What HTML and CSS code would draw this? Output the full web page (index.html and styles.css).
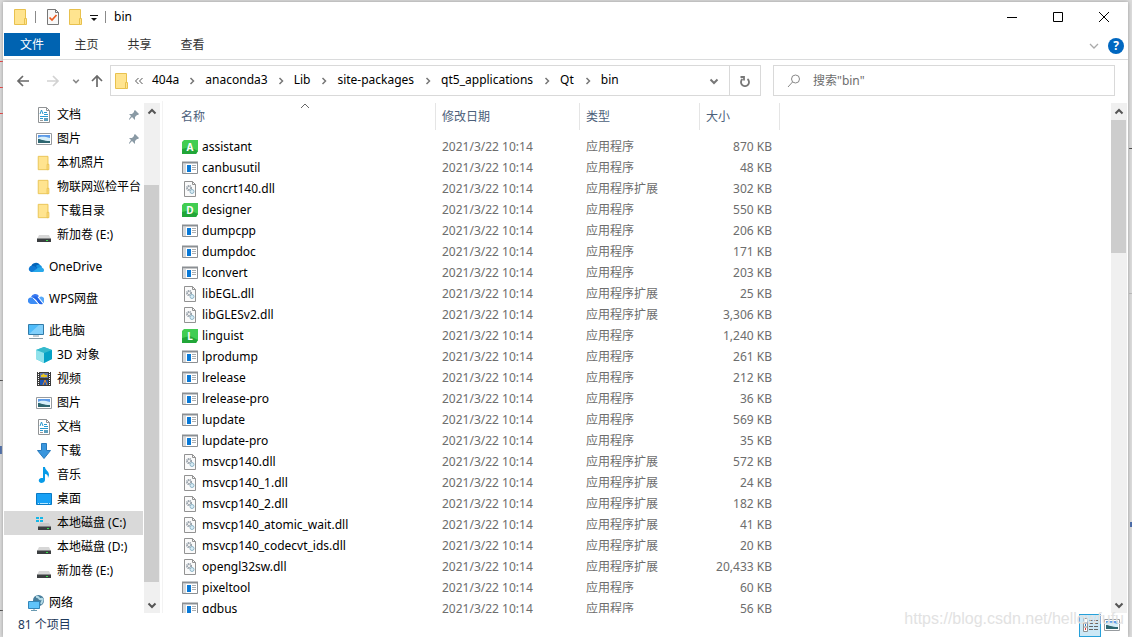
FILE: index.html
```html
<!DOCTYPE html>
<html lang="zh-CN">
<head>
<meta charset="utf-8">
<title>bin</title>
<link rel="stylesheet" href="styles.css">
</head>
<body>
<svg class="defs" aria-hidden="true">
  <symbol id="folder" viewBox="0 0 16 18"><path d="M1.500 1.500h11v15h-11z" fill="#ffe48f" stroke="#e8c14e"/><path d="M11.500 16.500V10.500h2v6z" fill="#ffe48f" stroke="#e8c14e"/></symbol>
  <symbol id="doc" viewBox="0 0 16 16"><path d="M2.500.5h8l3 3v12h-11z" fill="#fff" stroke="#909395"/><path d="M10.500.5v3h3" fill="none" stroke="#909395"/><path d="M4 7l1.500-4 1.500 4M8 5.500h3M8 7.500h4M4 9.500h8M4 11.500h3" fill="none" stroke="#299ad0"/><path d="M8 11h4v3H8z" fill="#5d9fbd"/><path d="M4 13.500h3" stroke="#999"/></symbol>
  <symbol id="pic" viewBox="0 0 16 16"><path d="M.5 2.500h15v11H.5z" fill="#fff" stroke="#979b9f"/><path d="M2 4h12v8H2z" fill="#5d9be8"/><path d="M2 7c4-2 7-1 12 0v3H2z" fill="#d7effa"/><path d="M2 8c3 0 5 2 12 2v2H2z" fill="#2d6670"/></symbol>
  <symbol id="drive" viewBox="0 0 16 16"><path d="M3 8h10l2 4H1z" fill="#d7d7d7"/><path d="M1 11.500h14V15H1z" fill="#3b3e40"/><path d="M10 13.500h2" stroke="#39dd4b"/></symbol>
  <symbol id="cdrive" viewBox="0 0 16 16"><path d="M4 8h9l2 4H2z" fill="#c7c7c7"/><path d="M2 11.500h13V15H2z" fill="#3b3e40"/><path d="M11 13.500h2" stroke="#39dd4b"/><path d="M0 2h3v2H0zM4 2h3v2H4zM0 5h3v2H0zM4 5h3v2H4z" fill="#13b7e8"/></symbol>
  <symbol id="onedrive" viewBox="0 0 16 16"><path d="M3 8a5 5 0 0 1 9-2l-4 5z" fill="#0364b8"/><path d="M8 7a3.500 3.500 0 0 1 6 1l-2 5z" fill="#1490df"/><path d="M3 13a3 3 0 1 1 2-6c2 0 4 2 7 4l-1 2z" fill="#0f78d4"/><path d="M4 13l6-4c3-2 6 0 6 2s-1 2-2 2z" fill="#28a8ea"/></symbol>
  <symbol id="wps" viewBox="0 0 16 16"><path d="M3 6a4.500 4.500 0 0 1 8-1L8 8z" fill="#3a7bf0"/><path d="M3 13a3.300 3.300 0 1 1 2-6l5 6z" fill="#3d8df5"/><path d="M5 6c3-2 5 0 6 2l4 5c-4 1-5-1-6-3z" fill="#2265e8"/><path d="M5 7l6 6" stroke="#fff" stroke-width=".7"/><path d="M11 6.500a3.300 3.300 0 0 1 4.500 5.500z" fill="#58aafa"/></symbol>
  <symbol id="pc" viewBox="0 0 16 16"><path d="M.5 1.500h15v10H.5z" fill="#4fbcfa" stroke="#327ba8"/><path d="M1 11L11 2h4v9z" fill="#82d0fb"/><path d="M5 13h6M1 15.500h14" stroke="#879aa5"/></symbol>
  <symbol id="cube" viewBox="0 0 16 16"><path d="M8 0l8 3v9l-8 4-8-4V3z" fill="#35c4d8"/><path d="M8 0l8 3-8 3-8-3z" fill="#35b9cc"/><path d="M0 3l8 3v10l-8-4z" fill="#91e2eb"/><path d="M8 6l8-3v9l-8 4z" fill="#06a2c6"/></symbol>
  <symbol id="video" viewBox="0 0 16 16"><path d="M1 1h14v14H1z" fill="#3a3a3a"/><path d="M2.500 1v14M13.500 1v14" stroke="#fff" stroke-dasharray="1 1"/><path d="M4 2h8v5H4z" fill="#6679a8"/><path d="M4 9h8v5H4z" fill="#1e58b4"/><path d="M5 5h6M7 3l2 3" stroke="#e9c61f" stroke-width="2"/><path d="M7 14l2-5 2 5" stroke="#e58c28" fill="none"/></symbol>
  <symbol id="down" viewBox="0 0 16 16"><path d="M5.500.5h5v7h4L8 15.500 1.500 7.500h4z" fill="#3a96dd" stroke="#287abd"/></symbol>
  <symbol id="music" viewBox="0 0 16 16"><path d="M7 0h2c0 3 4 4 4 8l-1 3c0-3-1-4-3-4v6c0 2-2 3-4 3-3-1-3-4 0-5h2z" fill="#079be8"/></symbol>
  <symbol id="desktop" viewBox="0 0 16 16"><path d="M.5 2.500h15v11H.5z" fill="#18a1f5" stroke="#087ac5"/><path d="M2 12.500h1M4 12.500h8M13 12.500h1" stroke="#bbe9ff"/></symbol>
  <symbol id="network" viewBox="0 0 16 16"><circle cx="10.500" cy="5.500" r="5.500" fill="#477d9b"/><path d="M8 2c4-1 2 3 5 2s1 3 0 5" fill="none" stroke="#b4dae6" stroke-width="2"/><path d="M.5 6.500h11v7H.5z" fill="#60c4fa" stroke="#3386b9"/><path d="M3 15.500h6M6 14v1" stroke="#6a9ab1"/></symbol>
  <symbol id="app" viewBox="0 0 16 16"><path d="M.5 2.500h15v11H.5z" fill="#fff" stroke="#8b8f93"/><path d="M0 2.500h16" stroke="#8b8f93" stroke-width="2"/><path d="M1 4h3v9H1z" fill="#d5d8db"/><path d="M5 5h4v7H5z" fill="#0879d8"/><path d="M10 5.500h4M10 7.500h4M10 9.500h4" stroke="#a9adb0"/></symbol>
  <symbol id="dll" viewBox="0 0 16 16"><path d="M2.500.5h8l3 3v12h-11z" fill="#fafafa" stroke="#929292"/><path d="M10.500.5v3h3" fill="none" stroke="#929292"/><circle cx="7" cy="7" r="2" fill="none" stroke="#929ca5" stroke-width="2" stroke-dasharray="1 .5"/><circle cx="10" cy="10.500" r="2" fill="#d8edf6" stroke="#8fb5c7"/></symbol>
  <symbol id="green" viewBox="0 0 16 16"><path d="M2 1h14v11l-2 3H0V3z" fill="#41cd52"/><path d="M0 10l8-2 8 4-2 3H0z" fill="#21a638"/></symbol>
  <symbol id="pin" viewBox="0 0 12 12"><path d="M7 1l4 4-1 1-1 0-2 2 0 3-3-3-3 3 0-1 2-3-2-2h3l2-2V2z" fill="#8a9aa5"/></symbol>
  <symbol id="chev" viewBox="0 0 10 10"><path d="M1.500 3.500L5 7l3.500-3.500" fill="none" stroke="currentColor" stroke-width="2"/></symbol>
  <symbol id="right" viewBox="0 0 10 10"><path d="M3.500 2L6.500 5l-3 3" fill="none" stroke="#777" stroke-width="1.500"/></symbol>
  <symbol id="arrow" viewBox="0 0 14 14"><path d="M13 7H2M7 2L2 7l5 5" fill="none" stroke="currentColor" stroke-width="1.700"/></symbol>
</svg>
<div class="desktop" aria-hidden="true">
  <i class="mark red m1"></i><i class="mark red m2"></i><i class="mark red m3"></i><i class="mark dark m4"></i><i class="mark blue m5"></i><i class="mark dark m6"></i>
  <i class="mark dark r1"></i><i class="mark pale r2"></i><i class="mark blue r3"></i>
</div>
<div class="window">
  <header class="titlebar">
    <svg class="fold"><use href="#folder"/></svg><span class="bar"></span>
    <svg class="check" viewBox="0 0 14 16"><path d="M1.500.5h8l3 3v12h-11z" fill="#f8f8f8" stroke="#777"/><path d="M9.500.5v3h3" fill="none" stroke="#777"/><path d="M3.500 8.500L6 11l4.500-5" fill="none" stroke="#ea5b21" stroke-width="1.700"/></svg>
    <svg class="fold"><use href="#folder"/></svg>
    <svg class="quick" viewBox="0 0 8 8"><path d="M0 1.500h8" stroke="#111"/><path d="M1 4h6L4 7z" fill="#111"/></svg>
    <span class="bar last"></span><h1>bin</h1>
    <div class="winbtns">
      <button aria-label="最小化"><svg viewBox="0 0 12 12"><path d="M1 6.500h10" stroke="#000"/></svg></button>
      <button aria-label="最大化"><svg viewBox="0 0 12 12"><path d="M1.500 1.500h9v9h-9z" fill="none" stroke="#000"/></svg></button>
      <button aria-label="关闭"><svg viewBox="0 0 12 12"><path d="M1 1l10 10M11 1L1 11" stroke="#000" fill="none"/></svg></button>
    </div>
  </header>
  <nav class="ribbon">
    <button class="file">文件</button><button>主页</button><button>共享</button><button>查看</button>
    <span class="grow"></span>
    <button class="expand" aria-label="展开功能区"><svg class="i10" viewBox="0 0 10 10"><path d="M1 3l4 4 4-4" fill="none" stroke="#aaa" stroke-width="1.300"/></svg></button>
    <button class="help" aria-label="帮助">?</button>
  </nav>
  <div class="addressrow">
    <button class="nav" aria-label="后退"><svg class="i14"><use href="#arrow"/></svg></button>
    <button class="nav off" aria-label="前进"><svg class="i14 flip"><use href="#arrow"/></svg></button>
    <button class="nav recent" aria-label="最近"><svg class="i8"><use href="#chev"/></svg></button>
    <button class="nav up" aria-label="向上"><svg class="i14 turn"><use href="#arrow"/></svg></button>
    <div class="address">
      <svg class="fold"><use href="#folder"/></svg>
      <svg class="dbl" viewBox="0 0 10 10"><path d="M4.500 2L1.500 5l3 3M8.500 2L5.500 5l3 3" fill="none" stroke="#555"/></svg>
      <button>404a</button><svg class="sep"><use href="#right"/></svg><button>anaconda3</button><svg class="sep"><use href="#right"/></svg><button>Lib</button><svg class="sep"><use href="#right"/></svg><button>site-packages</button><svg class="sep"><use href="#right"/></svg><button>qt5_applications</button><svg class="sep"><use href="#right"/></svg><button>Qt</button><svg class="sep"><use href="#right"/></svg><button>bin</button>
      <span class="grow"></span>
      <button class="drop" aria-label="历史"><svg class="i10"><use href="#chev"/></svg></button>
      <button class="refresh" aria-label="刷新"><svg viewBox="0 0 12 12"><path d="M3.500 4A4 4 0 1 0 8.500 4M1.500 2h3.500v3.500" fill="none" stroke="#777" stroke-width="1.800"/></svg></button>
    </div>
    <label class="search"><svg viewBox="0 0 14 14"><circle cx="8.500" cy="5" r="4" fill="none" stroke="#888"/><path d="M5.500 8L1 13" stroke="#888"/></svg><input type="text" aria-label="搜索" placeholder='搜索"bin"'></label>
  </div>
  <main>
    <aside>
      <ul class="tree">
        <li class="sub"><svg><use href="#doc"/></svg><a href="#">文档</a><svg class="pin"><use href="#pin"/></svg></li>
        <li class="sub"><svg><use href="#pic"/></svg><a href="#">图片</a><svg class="pin"><use href="#pin"/></svg></li>
        <li class="sub"><svg><use href="#folder"/></svg><a href="#">本机照片</a></li>
        <li class="sub"><svg><use href="#folder"/></svg><a href="#">物联网巡检平台</a></li>
        <li class="sub"><svg><use href="#folder"/></svg><a href="#">下载目录</a></li>
        <li class="sub"><svg><use href="#drive"/></svg><a href="#">新加卷 (E:)</a></li>
        <li class="root"><svg><use href="#onedrive"/></svg><a href="#">OneDrive</a></li>
        <li class="root"><svg><use href="#wps"/></svg><a href="#">WPS网盘</a></li>
        <li class="root"><svg><use href="#pc"/></svg><a href="#">此电脑</a></li>
        <li class="sub"><svg><use href="#cube"/></svg><a href="#">3D 对象</a></li>
        <li class="sub"><svg><use href="#video"/></svg><a href="#">视频</a></li>
        <li class="sub"><svg><use href="#pic"/></svg><a href="#">图片</a></li>
        <li class="sub"><svg><use href="#doc"/></svg><a href="#">文档</a></li>
        <li class="sub"><svg><use href="#down"/></svg><a href="#">下载</a></li>
        <li class="sub"><svg><use href="#music"/></svg><a href="#">音乐</a></li>
        <li class="sub"><svg><use href="#desktop"/></svg><a href="#">桌面</a></li>
        <li class="sub selected"><svg><use href="#cdrive"/></svg><a href="#">本地磁盘 (C:)</a></li>
        <li class="sub"><svg><use href="#drive"/></svg><a href="#">本地磁盘 (D:)</a></li>
        <li class="sub"><svg><use href="#drive"/></svg><a href="#">新加卷 (E:)</a></li>
        <li class="root"><svg><use href="#network"/></svg><a href="#">网络</a></li>
      </ul>
      <div class="scroll side"><button aria-label="向上滚动"><svg class="i10 over"><use href="#chev"/></svg></button><span class="before"></span><span class="thumb"></span><span class="after"></span><button aria-label="向下滚动"><svg class="i10"><use href="#chev"/></svg></button></div>
    </aside>
    <section class="files">
      <table>
        <colgroup><col class="c1"><col class="c2"><col class="c3"><col class="c4"></colgroup>
        <thead><tr><th><svg class="sort" viewBox="0 0 10 6"><path d="M1 5l4-4 4 4" fill="none" stroke="#666"/></svg>名称</th><th>修改日期</th><th>类型</th><th>大小</th></tr></thead>
        <tbody>
        <tr><td><span class="qt"><svg><use href="#green"/></svg><b>A</b></span>assistant</td><td>2021/3/22 10:14</td><td>应用程序</td><td>870 KB</td></tr>
        <tr><td><svg><use href="#app"/></svg>canbusutil</td><td>2021/3/22 10:14</td><td>应用程序</td><td>48 KB</td></tr>
        <tr><td><svg><use href="#dll"/></svg>concrt140.dll</td><td>2021/3/22 10:14</td><td>应用程序扩展</td><td>302 KB</td></tr>
        <tr><td><span class="qt"><svg><use href="#green"/></svg><b>D</b></span>designer</td><td>2021/3/22 10:14</td><td>应用程序</td><td>550 KB</td></tr>
        <tr><td><svg><use href="#app"/></svg>dumpcpp</td><td>2021/3/22 10:14</td><td>应用程序</td><td>206 KB</td></tr>
        <tr><td><svg><use href="#app"/></svg>dumpdoc</td><td>2021/3/22 10:14</td><td>应用程序</td><td>171 KB</td></tr>
        <tr><td><svg><use href="#app"/></svg>lconvert</td><td>2021/3/22 10:14</td><td>应用程序</td><td>203 KB</td></tr>
        <tr><td><svg><use href="#dll"/></svg>libEGL.dll</td><td>2021/3/22 10:14</td><td>应用程序扩展</td><td>25 KB</td></tr>
        <tr><td><svg><use href="#dll"/></svg>libGLESv2.dll</td><td>2021/3/22 10:14</td><td>应用程序扩展</td><td>3,306 KB</td></tr>
        <tr><td><span class="qt"><svg><use href="#green"/></svg><b>L</b></span>linguist</td><td>2021/3/22 10:14</td><td>应用程序</td><td>1,240 KB</td></tr>
        <tr><td><svg><use href="#app"/></svg>lprodump</td><td>2021/3/22 10:14</td><td>应用程序</td><td>261 KB</td></tr>
        <tr><td><svg><use href="#app"/></svg>lrelease</td><td>2021/3/22 10:14</td><td>应用程序</td><td>212 KB</td></tr>
        <tr><td><svg><use href="#app"/></svg>lrelease-pro</td><td>2021/3/22 10:14</td><td>应用程序</td><td>36 KB</td></tr>
        <tr><td><svg><use href="#app"/></svg>lupdate</td><td>2021/3/22 10:14</td><td>应用程序</td><td>569 KB</td></tr>
        <tr><td><svg><use href="#app"/></svg>lupdate-pro</td><td>2021/3/22 10:14</td><td>应用程序</td><td>35 KB</td></tr>
        <tr><td><svg><use href="#dll"/></svg>msvcp140.dll</td><td>2021/3/22 10:14</td><td>应用程序扩展</td><td>572 KB</td></tr>
        <tr><td><svg><use href="#dll"/></svg>msvcp140_1.dll</td><td>2021/3/22 10:14</td><td>应用程序扩展</td><td>24 KB</td></tr>
        <tr><td><svg><use href="#dll"/></svg>msvcp140_2.dll</td><td>2021/3/22 10:14</td><td>应用程序扩展</td><td>182 KB</td></tr>
        <tr><td><svg><use href="#dll"/></svg>msvcp140_atomic_wait.dll</td><td>2021/3/22 10:14</td><td>应用程序扩展</td><td>41 KB</td></tr>
        <tr><td><svg><use href="#dll"/></svg>msvcp140_codecvt_ids.dll</td><td>2021/3/22 10:14</td><td>应用程序扩展</td><td>20 KB</td></tr>
        <tr><td><svg><use href="#dll"/></svg>opengl32sw.dll</td><td>2021/3/22 10:14</td><td>应用程序扩展</td><td>20,433 KB</td></tr>
        <tr><td><svg><use href="#app"/></svg>pixeltool</td><td>2021/3/22 10:14</td><td>应用程序</td><td>60 KB</td></tr>
        <tr><td><svg><use href="#app"/></svg>qdbus</td><td>2021/3/22 10:14</td><td>应用程序</td><td>56 KB</td></tr>
        </tbody>
      </table>
    </section>
    <div class="scroll list"><button aria-label="向上滚动"><svg class="i10 over"><use href="#chev"/></svg></button><span class="thumb"></span><span class="after"></span><button aria-label="向下滚动"><svg class="i10"><use href="#chev"/></svg></button></div>
  </main>
  <footer><span>81 个项目</span><span class="grow"></span>
    <button class="view on" aria-label="详细信息"><svg viewBox="0 0 16 16"><path d="M1.500 1.500h4v13h-4zM1.500 6h4M1.500 10h4" fill="#fff" stroke="#909090"/><path d="M7 3.500h4M12 3.500h4M7 6.500h4M12 6.500h4M7 9.500h4M12 9.500h4M7 12.500h4M12 12.500h4" stroke="#666"/><path d="M3 8h1" stroke="#2779c7" stroke-width="2"/><path d="M3 12h1" stroke="#d33" stroke-width="2"/></svg></button>
    <button class="view" aria-label="大图标"><svg><use href="#pic"/></svg></button>
  </footer>
</div>
<div class="watermark">https://blog.csdn.net/hellowfufu</div>
</body>
</html>
```
FILE: styles.css
```css
* { box-sizing: border-box; }
body { margin: 0; height: 100vh; padding: 2px 4px 0 3px; background: #dcdcdc; overflow: hidden; font: 12px/20px "Noto Sans", "Noto Sans CJK SC", sans-serif; color: #000; }
.defs { position: absolute; width: 0; height: 0; }
button { border: 0; padding: 0; background: none; font: inherit; color: inherit; display: flex; align-items: center; justify-content: center; }
a { color: inherit; text-decoration: none; }
svg { flex: none; display: block; }
.grow { flex: 1; }
.i8 { width: 8px; height: 8px; }
.i10 { width: 10px; height: 10px; }
.i14 { width: 14px; height: 14px; }
.over, .flip { transform: rotate(180deg); }
.turn { transform: rotate(90deg); }

/* Traces of the document behind the window */
.desktop { position: absolute; inset: 0; }
.mark { position: absolute; left: 0; width: 3px; height: 1px; }
.red { background: #e33; }
.dark { background: #444; }
.pale { background: #bbb; }
.blue { background: #4668a8; height: 8px; width: 2px; }
.m1 { top: 61px; }
.m2 { top: 87px; }
.m3 { top: 113px; }
.m4 { top: 380px; }
.m5 { top: 446px; }
.m6 { top: 610px; }
.r1, .r2, .r3 { left: auto; right: 0; }
.r1 { top: 148px; }
.r2 { top: 293px; }
.r3 { top: 522px; height: 5px; }

.window { position: relative; height: 100%; display: flex; flex-direction: column; background: #fff; box-shadow: 0 0 4px #999; }
.titlebar { height: 30px; display: flex; align-items: center; padding-left: 10px; flex: none; }
.fold { width: 16px; height: 18px; }
.bar { width: 1px; height: 12px; margin: 0 10px 0 6px; background: #8a8a8a; }
.bar.last { margin: 0 8px 0 7px; }
.check { width: 14px; height: 16px; margin-right: 8px; }
.quick { width: 8px; height: 8px; margin: 2px 0 0 6px; }
.titlebar h1 { font: inherit; margin: 0 auto 0 0; }
.winbtns { display: flex; margin-right: 1px; }
.winbtns button { width: 46px; height: 30px; }
.winbtns svg { width: 12px; height: 12px; }
.ribbon { height: 28px; flex: none; display: flex; align-items: flex-start; border-bottom: 1px solid #dadbdc; padding: 1px 4px 0 1px; color: #333; }
.ribbon button { width: 53px; height: 24px; }
.ribbon .file { width: 56px; height: 23px; background: #0063b1; color: #fff; }
.ribbon .expand { width: 16px; height: 26px; margin-right: 6px; }
.ribbon .help { width: 16px; height: 16px; margin-top: 5px; border-radius: 50%; background: #0067c0; color: #fff; font-weight: bold; }
.addressrow { height: 41px; flex: none; display: flex; align-items: center; padding: 0 13px; }
.nav { width: 14px; height: 30px; margin-right: 16px; color: #6a6a6a; }
.nav.off { color: #d2d2d2; margin-right: 12px; }
.nav.recent { width: 8px; margin-right: 10px; color: #888; }
.nav.up { margin-right: 6px; }
.address { flex: 1; min-width: 0; height: 31px; border: 1px solid #d9d9d9; display: flex; align-items: center; padding-left: 3px; }
.address > button { height: 20px; margin-top: -2px; }
.dbl { width: 10px; height: 10px; margin: 0 8px 0 4px; }
.sep { width: 10px; height: 10px; margin: 0 8px; }
.sep ~ .sep ~ .sep { margin: 0 8px 0 9px; }
.address .drop { width: 30px; height: 29px; margin: 0; color: #777; }
.address .refresh { width: 31px; height: 29px; margin: 0; border-left: 1px solid #d9d9d9; }
.refresh svg { width: 12px; height: 12px; }
.search { flex: 0 1 342px; min-width: 0; height: 31px; margin-left: 12px; border: 1px solid #d9d9d9; display: flex; align-items: center; padding-left: 13px; }
.search svg { width: 14px; height: 14px; margin-right: 12px; }
.search input { flex: 1; min-width: 0; border: 0; outline: 0; padding: 0; font: inherit; background: none; }
.search input::placeholder { color: #6d6d6d; opacity: 1; }
main { flex: 1; min-height: 0; display: flex; padding: 0 1px; }
aside { width: 159px; flex: none; display: flex; padding-right: 2px; border-right: 1px solid #f3f3f3; }
.tree { flex: 1; min-width: 0; list-style: none; margin: 0 1px 0 0; padding: 2px 0 0; overflow: hidden; }
.tree li { height: 24px; display: flex; align-items: center; gap: 5px; white-space: nowrap; }
.tree svg { width: 16px; height: 16px; }
.tree .sub { padding-left: 32px; }
.tree .root { padding-left: 24px; margin: 8px 0 0; }
.tree .selected { background: #d9d9d9; }
.tree .pin { width: 12px; height: 12px; margin-left: auto; margin-right: 3px; }
.scroll { width: 16px; flex: none; display: flex; flex-direction: column; background: #f0f0f0; color: #555; margin-top: 2px; }
.scroll button { height: 17px; flex: none; }
.thumb { background: #cdcdcd; width: 15px; }
.side .before { flex: 65; }
.side .thumb { flex: 399; }
.side .after { flex: 14; }
.list .thumb { flex: 133; }
.list .after { flex: 344; }
.files { flex: 1; min-width: 0; overflow: hidden; padding: 2px 0 0 8px; }
table { table-layout: fixed; width: 609px; border-collapse: separate; border-spacing: 0; }
.c1 { width: 265px; }
.c2 { width: 144px; }
.c3 { width: 120px; }
.c4 { width: 80px; }
th { position: relative; height: 27px; padding: 0 6px; text-align: left; font-weight: normal; color: #4c607a; border-right: 1px solid #e5e5e5; }
th:first-child { padding-left: 10px; }
.sort { position: absolute; left: 49%; top: 0; width: 10px; height: 6px; }
tbody::before { content: ""; display: block; height: 6px; }
td { height: 21px; padding: 0 6px; color: #6d6d6d; white-space: nowrap; line-height: 20px; }
td:first-child { display: flex; align-items: center; gap: 4px; padding-left: 11px; color: #000; }
td:last-child { text-align: right; padding-right: 8px; }
td svg { width: 16px; height: 16px; }
.qt { position: relative; }
.qt b { position: absolute; inset: 0; text-align: center; color: #fff; font-size: 10px; line-height: 16px; }
footer { height: 24px; flex: none; display: flex; align-items: center; padding: 0 5px 0 15px; color: #1e395b; }
.view { width: 22px; height: 23px; }
.view svg { width: 16px; height: 16px; }
.view.on { background: #cce8f6; border: 1px solid #26a0da; }
.watermark { position: absolute; right: 8px; bottom: 8px; font: 16px/20px "Liberation Sans", sans-serif; color: #e2e2e2; pointer-events: none; }
```
